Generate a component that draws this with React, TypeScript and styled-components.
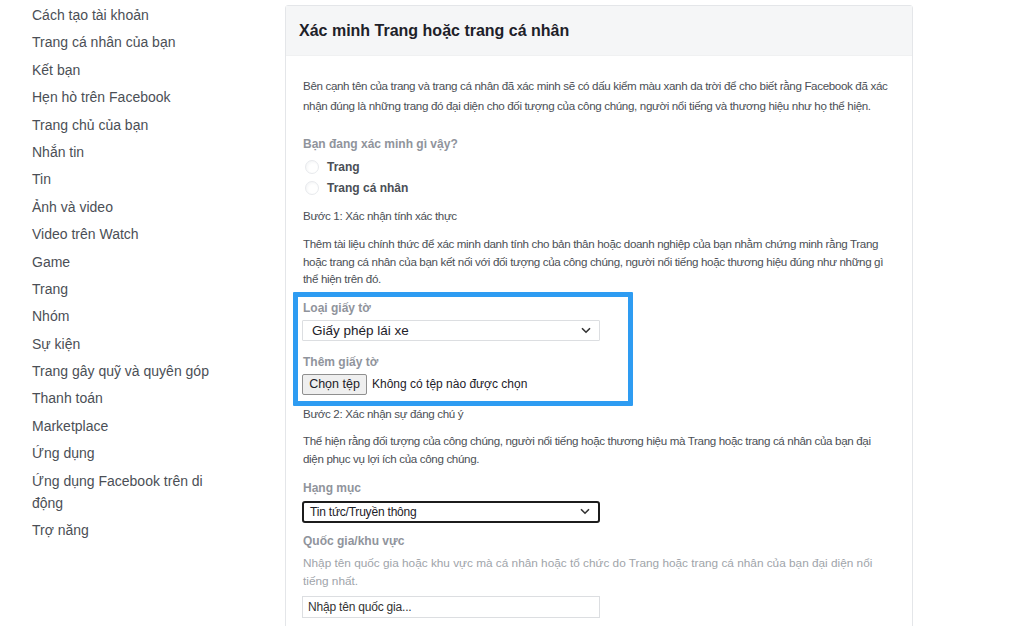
import React from "react";
import styled, { createGlobalStyle } from "styled-components";

const Global = createGlobalStyle`
  html, body { margin: 0; padding: 0; background: #ffffff; }
  body { font-family: "Liberation Sans", Arial, sans-serif; }
  * { box-sizing: border-box; }
`;

const Page = styled.div`
  display: flex;
  align-items: flex-start;
  width: 1017px;
  height: 626px;
  overflow: hidden;
`;

const Sidebar = styled.nav`
  width: 285px;
  flex: none;
  padding: 4px 0 0 32px;
  display: flex;
  flex-direction: column;
  gap: 5.4px;
`;

const NavItem = styled.a`
  display: block;
  width: 186px;
  font-size: 14px;
  line-height: 22px;
  color: #4b4f56;
  text-decoration: none;
`;

const Card = styled.section`
  width: 628px;
  flex: none;
  margin-top: 5px;
  border: 1px solid #e4e6e9;
  border-radius: 3px;
  background: #fff;
  min-height: 700px;
`;

const CardHeader = styled.header`
  height: 50px;
  background: #f5f6f7;
  border-bottom: 1px solid #f0f1f2;
  display: flex;
  align-items: center;
  padding-left: 13px;
`;

const Title = styled.h2`
  margin: 0;
  font-size: 16px;
  font-weight: bold;
  color: #1d2129;
`;

const CardBody = styled.div`
  padding: 20px 18px 0 17px;
  display: flex;
  flex-direction: column;
`;

const Text = styled.p<{ $lh?: number; $mt?: number; $muted?: boolean }>`
  margin: ${(p) => p.$mt ?? 0}px 0 0;
  font-size: ${(p) => (p.$muted ? 11.8 : 11.6)}px;
  line-height: ${(p) => p.$lh ?? 18}px;
  color: ${(p) => (p.$muted ? "#a0a4aa" : "#4b4f56")};
  letter-spacing: ${(p) => (p.$muted ? "0" : "-0.35px")};
`;

const Label = styled.div<{ $mt?: number }>`
  margin-top: ${(p) => p.$mt ?? 0}px;
  font-size: 12px;
  line-height: 16px;
  font-weight: bold;
  color: #90949c;
`;

const RadioGroup = styled.div`
  margin-top: 7px;
  display: flex;
  flex-direction: column;
  gap: 5px;
  padding-left: 2px;
`;

const RadioRow = styled.label`
  display: flex;
  align-items: center;
  gap: 8px;
  font-size: 12px;
  line-height: 16px;
  font-weight: bold;
  color: #4b4f56;
`;

const RadioDot = styled.span`
  width: 14px;
  height: 14px;
  border-radius: 50%;
  border: 1px solid #e8eaed;
  background: radial-gradient(circle at 60% 60%, #ffffff 40%, #eef0f2 100%);
`;

const Highlight = styled.div`
  position: relative;
  margin-top: 12px;
  display: flex;
  flex-direction: column;
`;

const HighlightFrame = styled.div`
  position: absolute;
  left: -10px;
  top: -8px;
  width: 340px;
  height: 114px;
  border: 5px solid #2e9cf2;
  border-radius: 1px;
  pointer-events: none;
  z-index: 2;
`;

const SelectBox = styled.div<{ $focused?: boolean; $mt?: number }>`
  margin-top: ${(p) => p.$mt ?? 0}px;
  width: 298px;
  height: ${(p) => (p.$focused ? 22 : 21)}px;
  margin-left: -1px;
  display: flex;
  align-items: center;
  justify-content: space-between;
  padding: 0 8px 0 ${(p) => (p.$focused ? 6 : 9)}px;
  border: ${(p) => (p.$focused ? "2px solid #1c1c1c" : "1px solid #dcdee1")};
  border-radius: ${(p) => (p.$focused ? 3 : 1)}px;
  background: #fff;
  font-size: ${(p) => (p.$focused ? 12 : 13.5)}px;
  color: #1d2129;
  letter-spacing: ${(p) => (p.$focused ? "-0.2px" : "0")};
`;

const Chevron = () => (
  <svg width="10" height="7" viewBox="0 0 10 7" aria-hidden="true">
    <path d="M1 1.2 L5 5.2 L9 1.2" fill="none" stroke="#333" strokeWidth="1.6" />
  </svg>
);

const FileRow = styled.div`
  margin-top: 4px;
  margin-left: -1px;
  display: flex;
  align-items: center;
  gap: 5px;
  font-size: 12px;
  color: #1d2129;
`;

const FileButton = styled.button`
  height: 21px;
  width: 65px;
  padding: 0;
  border: 1px solid #8f8f8f;
  border-radius: 2px;
  background: #efefef;
  font-family: "Liberation Sans", Arial, sans-serif;
  font-size: 12.5px;
  color: #1d2129;
`;

const TextInput = styled.div`
  margin-top: 6px;
  margin-left: -1px;
  width: 298px;
  height: 22px;
  border: 1px solid #dcdee1;
  display: flex;
  align-items: center;
  padding-left: 5px;
  font-size: 12px;
  color: #333;
  letter-spacing: -0.2px;
`;

const navItems = [
  "Cách tạo tài khoản",
  "Trang cá nhân của bạn",
  "Kết bạn",
  "Hẹn hò trên Facebook",
  "Trang chủ của bạn",
  "Nhắn tin",
  "Tin",
  "Ảnh và video",
  "Video trên Watch",
  "Game",
  "Trang",
  "Nhóm",
  "Sự kiện",
  "Trang gây quỹ và quyên góp",
  "Thanh toán",
  "Marketplace",
  "Ứng dụng",
  "Ứng dụng Facebook trên di động",
  "Trợ năng",
];

export default function App() {
  return (
    <>
      <Global />
      <Page>
        <Sidebar>
          {navItems.map((item) => (
            <NavItem key={item} href="#">
              {item}
            </NavItem>
          ))}
        </Sidebar>
        <Card>
          <CardHeader>
            <Title>Xác minh Trang hoặc trang cá nhân</Title>
          </CardHeader>
          <CardBody>
            <Text $lh={20}>
              Bên cạnh tên của trang và trang cá nhân đã xác minh sẽ có dấu kiểm màu xanh da trời để cho biết rằng Facebook đã xác nhận đúng là những trang đó đại diện cho đối tượng của công chúng, người nổi tiếng và thương hiệu như họ thể hiện.
            </Text>
            <Label $mt={20}>Bạn đang xác minh gì vậy?</Label>
            <RadioGroup>
              <RadioRow>
                <RadioDot />
                Trang
              </RadioRow>
              <RadioRow>
                <RadioDot />
                Trang cá nhân
              </RadioRow>
            </RadioGroup>
            <Text $mt={12} $lh={16}>Bước 1: Xác nhận tính xác thực</Text>
            <Text $mt={11} $lh={17.5}>
              Thêm tài liệu chính thức để xác minh danh tính cho bản thân hoặc doanh nghiệp của bạn nhằm chứng minh rằng Trang hoặc trang cá nhân của bạn kết nối với đối tượng của công chúng, người nổi tiếng hoặc thương hiệu đúng như những gì thể hiện trên đó.
            </Text>
            <Highlight>
              <HighlightFrame />
              <Label>Loại giấy tờ</Label>
              <SelectBox $mt={4}>
                Giấy phép lái xe
                <Chevron />
              </SelectBox>
              <Label $mt={13}>Thêm giấy tờ</Label>
              <FileRow>
                <FileButton type="button">Chọn tệp</FileButton>
                Không có tệp nào được chọn
              </FileRow>
            </Highlight>
            <Text $mt={11} $lh={16}>Bước 2: Xác nhận sự đáng chú ý</Text>
            <Text $mt={10} $lh={18}>
              Thể hiện rằng đối tượng của công chúng, người nổi tiếng hoặc thương hiệu mà Trang hoặc trang cá nhân của bạn đại diện phục vụ lợi ích của công chúng.
            </Text>
            <Label $mt={12}>Hạng mục</Label>
            <SelectBox $focused $mt={5}>
              Tin tức/Truyền thông
              <Chevron />
            </SelectBox>
            <Label $mt={10}>Quốc gia/khu vực</Label>
            <Text $mt={5} $lh={18} $muted>
              Nhập tên quốc gia hoặc khu vực mà cá nhân hoặc tổ chức do Trang hoặc trang cá nhân của bạn đại diện nổi tiếng nhất.
            </Text>
            <TextInput>Nhập tên quốc gia...</TextInput>
          </CardBody>
        </Card>
      </Page>
    </>
  );
}
